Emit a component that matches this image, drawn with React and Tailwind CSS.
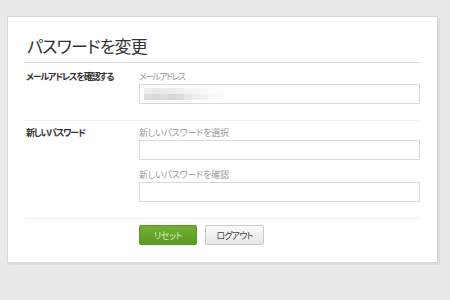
export default function App() {
  const font = { fontFamily: '"Noto Sans CJK JP", "Noto Sans", sans-serif' };
  const cells = [
    ['#eeeeee', '#e9e9e9', '#eaeaea', '#ececec', '#efefef', '#f3f3f3', '#f6f6f6', '#f8f8f8', '#fbfbfb', '#fdfdfd'],
    ['#dddddd', '#d9d9d9', '#dedede', '#d6d6d6', '#dcdcdc', '#e8e8e8', '#eeeeee', '#f2f2f2', '#f7f7f7', '#fbfbfb'],
  ];
  return (
    <div className="w-[450px] h-[300px] bg-[#e9e9e9] pt-[16px] pl-[7px]" style={font}>
      <div className="w-[431px] h-[247px] bg-white border border-[#d6d6d6] shadow-[2px_2px_0_#dedede] px-[17px] [font-feature-settings:'palt']">
        <div className="pt-[18px] pb-[6px] border-b border-[#dadada]">
          <h1 className="text-[17px] leading-[21px] text-[#333] pl-[2px] tracking-[-0.8px]">パスワードを変更</h1>
        </div>

        <div className="flex pt-[8px] pb-[16px] border-b border-[#efefef]">
          <div className="w-[114px] pl-[1px] text-[9px] leading-[12px] font-bold text-[#333] tracking-[-1.2px]">メールアドレスを確認する</div>
          <div className="w-[281px] flex flex-col">
            <div className="text-[9px] leading-[12px] text-[#9a9a9a] mb-[1px] tracking-[-1.6px]">メールアドレス</div>
            <div className="h-[20px] border border-[#d9d9d9] bg-white flex items-center pl-[4px]">
              <div className="flex flex-col blur-[0.6px]">
                {cells.map((row, i) => (
                  <div key={i} className="flex">
                    {row.map((c, j) => (
                      <div key={j} className="w-[8px] h-[6px]" style={{ backgroundColor: c }} />
                    ))}
                  </div>
                ))}
              </div>
            </div>
          </div>
        </div>

        <div className="flex pt-[6px] pb-[16px] border-b border-[#efefef]">
          <div className="w-[114px] pl-[1px] text-[9px] leading-[12px] font-bold text-[#333] tracking-[-1.2px]">新しいパスワード</div>
          <div className="w-[281px] flex flex-col">
            <div className="text-[9px] leading-[12px] text-[#9a9a9a] mb-[1px] tracking-[-0.2px]">新しいパスワードを選択</div>
            <div className="h-[20px] border border-[#d9d9d9] bg-white"></div>
            <div className="text-[9px] leading-[12px] text-[#9a9a9a] mt-[9px] mb-[1px] tracking-[-0.2px]">新しいパスワードを確認</div>
            <div className="h-[20px] border border-[#d9d9d9] bg-white"></div>
          </div>
        </div>

        <div className="flex pt-[6px] pl-[114px] gap-[8px]">
          <button className="w-[58px] h-[20px] rounded-[2px] bg-gradient-to-b from-[#71b033] to-[#5b9b22] border border-[#5a9628] text-[9px] text-[#d9efc3] leading-none tracking-[-0.5px]">リセット</button>
          <button className="w-[59px] h-[20px] rounded-[2px] bg-gradient-to-b from-[#fafafa] to-[#e6e6e6] border border-[#c9c9c9] text-[9px] text-[#444] leading-none tracking-[-0.8px]">ログアウト</button>
        </div>
      </div>
    </div>
  );
}
